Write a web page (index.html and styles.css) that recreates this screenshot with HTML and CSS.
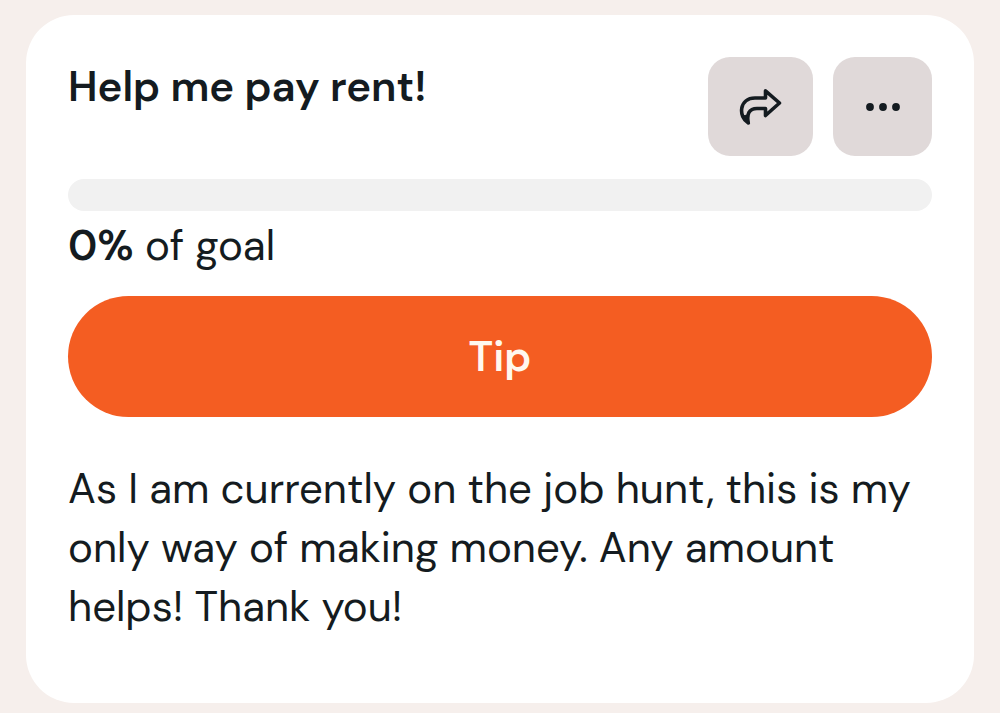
FILE: index.html
```html
<!DOCTYPE html>
<html lang="en">
<head>
<meta charset="utf-8">
<meta name="viewport" content="width=device-width, initial-scale=1">
<title>Help me pay rent!</title>
<link rel="stylesheet" href="styles.css">
</head>
<body>
<main class="goal-card">
  <header class="goal-header">
    <h1 class="goal-title">Help me pay rent!</h1>
    <div class="actions">
      <button class="icon-button share" type="button" aria-label="Share">
        <svg width="48" height="48" viewBox="0 0 48 48" fill="none" stroke="currentColor" stroke-width="3.6" stroke-linejoin="round" aria-hidden="true"><path d="M28.500 7.800L42.500 20L28.500 32.500V25.500H20C12 25.500 9.500 31 11.300 40C1 34 2 15 18 15H28.500Z"/><path d="M6 33L11.300 40L10 32Z" fill="currentColor" stroke-width="1"/></svg>
      </button>
      <button class="icon-button more" type="button" aria-label="More options">
        <svg width="40" height="12" viewBox="0 0 40 12" fill="currentColor" aria-hidden="true"><circle cx="7" cy="6" r="3.900"/><circle cx="20" cy="6" r="3.900"/><circle cx="33" cy="6" r="3.900"/></svg>
      </button>
    </div>
  </header>
  <div class="progress" role="progressbar" aria-label="Goal progress" aria-valuenow="0" aria-valuemin="0" aria-valuemax="100"></div>
  <p class="status"><strong>0%</strong> of goal</p>
  <button class="tip-button" type="button">Tip</button>
  <p class="description">As I am currently on the job hunt, this is my only way of making money. Any amount helps! Thank you!</p>
</main>
</body>
</html>
```
FILE: styles.css
```css
* { box-sizing: border-box; }
body {
  margin: 0;
  padding: 15px 26px 10px;
  background: #f6efec;
  color: #141b20;
  font-family: "DM Sans", "Open Sans", sans-serif;
  font-size: 42px;
  line-height: 59px;
}
.goal-card {
  padding: 42px 42px 67px;
  border-radius: 48px;
  background: #fff;
}
.goal-header { display: flex; justify-content: space-between; }
.goal-title { margin: 0; font-size: 42px; font-weight: 600; line-height: 60px; }
.actions { display: flex; gap: 20px; }
.icon-button {
  display: flex;
  align-items: center;
  justify-content: center;
  height: 99px;
  padding: 0;
  border: 0;
  border-radius: 22px;
  background: #e0d9d9;
  color: #141b20;
}
.share { width: 105px; }
.more { width: 99px; }
.progress { height: 32px; margin-top: 23px; border-radius: 16px; background: #f1f1f1; }
.status { margin: 5px 0 21px; }
.status strong { font-weight: 600; }
.tip-button {
  display: block;
  width: 100%;
  height: 121px;
  border: 0;
  border-radius: 61px;
  background: #f45d22;
  color: #fff8ee;
  font: inherit;
  font-weight: 600;
}
.description { margin: 42px 0 0; }
```
